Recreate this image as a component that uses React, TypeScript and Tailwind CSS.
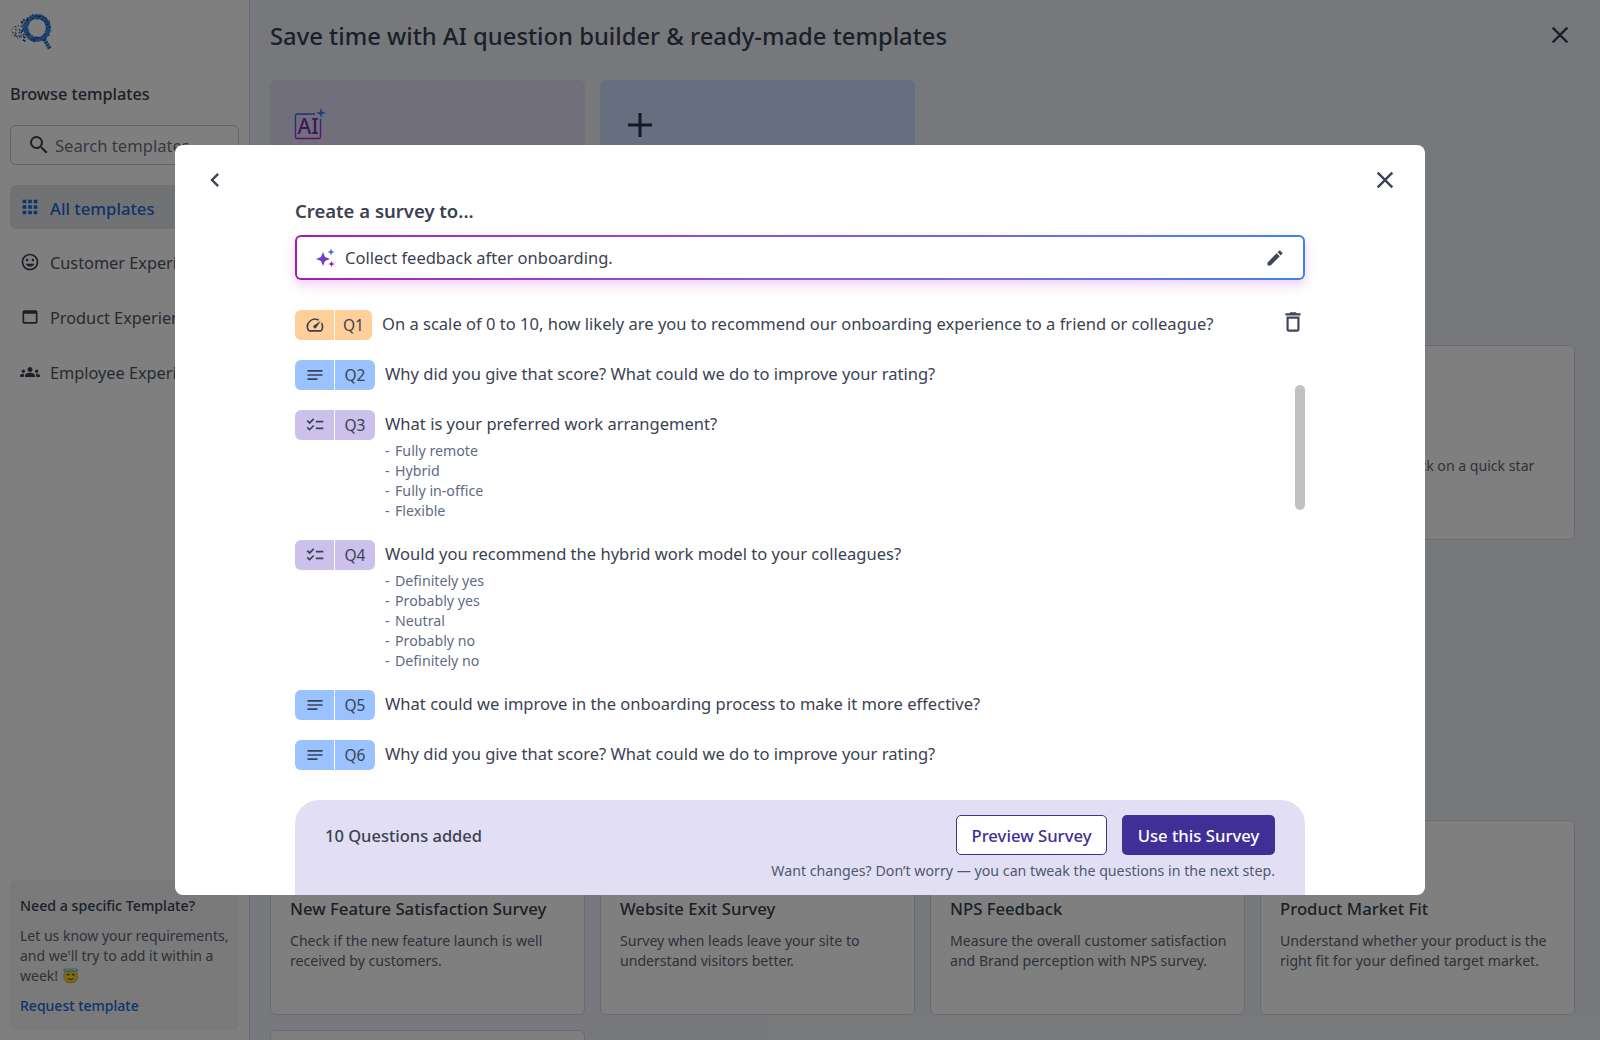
import React from "react";

const F = "font-['Noto_Sans','Open_Sans',sans-serif]";

function Mi({ d, className }: { d: string; className?: string }) {
  return (
    <svg viewBox="0 0 24 24" fill="currentColor" className={className}>
      <path d={d} />
    </svg>
  );
}

const P = {
  back: "M15.41 7.41 14 6l-6 6 6 6 1.41-1.41L10.83 12z",
  close: "M19 6.41 17.59 5 12 10.59 6.41 5 5 6.41 10.59 12 5 17.59 6.41 19 12 13.41 17.59 19 19 17.59 13.41 12z",
  edit: "M3 17.25V21h3.75L17.81 9.94l-3.75-3.75L3 17.25zM20.71 7.04c.39-.39.39-1.02 0-1.41l-2.34-2.34c-.39-.39-1.02-.39-1.41 0l-1.83 1.83 3.75 3.75 1.83-1.83z",
  trash: "M6 19c0 1.1.9 2 2 2h8c1.1 0 2-.9 2-2V7H6v12zM8 9h8v10H8V9zm7.5-5l-1-1h-5l-1 1H5v2h14V4z",
  speed: "M20.38 8.57l-1.23 1.85a8 8 0 0 1-.22 7.58H5.07A8 8 0 0 1 15.58 6.85l1.85-1.23A10 10 0 0 0 3.35 19a2 2 0 0 0 1.72 1h13.85a2 2 0 0 0 1.74-1 10 10 0 0 0-.27-10.44zm-9.79 6.84a2 2 0 0 0 2.83 0l5.66-8.49-8.49 5.66a2 2 0 0 0 0 2.83z",
  notes: "M3 18h12v-2H3v2zM3 6v2h18V6H3zm0 7h18v-2H3v2z",
  check: "M22 7h-9v2h9V7zm0 8h-9v2h9v-2zM5.54 11 2 7.46l1.41-1.41 2.12 2.12 4.24-4.24 1.41 1.41L5.54 11zm0 8L2 15.46l1.41-1.41 2.12 2.12 4.24-4.24 1.41 1.41L5.54 19z",
  apps: "M4 8h4V4H4v4zm6 12h4v-4h-4v4zm-6 0h4v-4H4v4zm0-6h4v-4H4v4zm6 0h4v-4h-4v4zm6-10v4h4V4h-4zm-6 4h4V4h-4v4zm6 6h4v-4h-4v4zm0 6h4v-4h-4v4z",
  smile: "M11.99 2C6.47 2 2 6.48 2 12s4.47 10 9.99 10C17.52 22 22 17.52 22 12S17.52 2 11.99 2zM12 20c-4.42 0-8-3.58-8-8s3.58-8 8-8 8 3.58 8 8-3.58 8-8 8zm3.5-9c.83 0 1.5-.67 1.5-1.5S16.33 8 15.5 8 14 8.67 14 9.5s.67 1.5 1.5 1.5zm-7 0c.83 0 1.5-.67 1.5-1.5S9.33 8 8.5 8 7 8.67 7 9.5 7.67 11 8.5 11zm3.5 6.5c2.33 0 4.31-1.46 5.11-3.5H6.89c.8 2.04 2.78 3.5 5.11 3.5z",
  web: "M19 4H5c-1.11 0-2 .9-2 2v12c0 1.1.89 2 2 2h14c1.1 0 2-.9 2-2V6c0-1.1-.89-2-2-2zm0 14H5V8h14v10z",
  groups: "M12 12.75c1.63 0 3.07.39 4.24.9 1.08.48 1.76 1.56 1.76 2.73V18H6v-1.61c0-1.18.68-2.26 1.76-2.73 1.17-.52 2.61-.91 4.24-.91zM4 13c1.1 0 2-.9 2-2s-.9-2-2-2-2 .9-2 2 .9 2 2 2zm1.13 1.1c-.37-.06-.74-.1-1.13-.1-.99 0-1.93.21-2.78.58C.48 14.9 0 15.62 0 16.43V18h4.5v-1.61c0-.83.23-1.61.63-2.29zM20 13c1.1 0 2-.9 2-2s-.9-2-2-2-2 .9-2 2 .9 2 2 2zm4 3.43c0-.81-.48-1.53-1.22-1.85-.85-.37-1.79-.58-2.78-.58-.39 0-.76.04-1.13.1.4.68.63 1.46.63 2.29V18H24v-1.57zM12 6c1.66 0 3 1.34 3 3s-1.34 3-3 3-3-1.34-3-3 1.34-3 3-3z",
  search: "M15.5 14h-.79l-.28-.27A6.471 6.471 0 0 0 16 9.5 6.5 6.5 0 1 0 9.5 16c1.61 0 3.09-.59 4.23-1.57l.27.28v.79l5 4.99L20.49 19l-4.99-5zm-6 0C7.01 14 5 11.99 5 9.5S7.01 5 9.5 5 14 7.01 14 9.5 11.99 14 9.5 14z",
};

function Logo() {
  let seed = 12345;
  const rnd = () => {
    seed = (seed * 1103515245 + 12345) % 2147483648;
    return seed / 2147483648;
  };
  const speck: React.ReactNode[] = [];
  for (let i = 0; i < 170; i++) {
    const a = rnd() * Math.PI * 2;
    const r = 8.8 + rnd() * 5.6;
    const v = rnd();
    speck.push(
      <circle key={i} cx={27 + r * Math.cos(a)} cy={16 + r * Math.sin(a)} r={0.7} fill={v < 0.22 ? "#14305f" : v < 0.62 ? "#5aa2f5" : "#2468c8"} />
    );
  }
  const dots: React.ReactNode[] = [];
  for (let i = 0; i < 60; i++) {
    const x = 1 + rnd() * 14;
    const h = 2 + x * 0.7;
    const y = 19 + (rnd() - 0.5) * 2 * h;
    dots.push(<circle key={i} cx={x} cy={y} r={0.35 + (x / 15) * 0.5} fill={rnd() < 0.6 ? "#2a66c0" : "#1d2c4c"} />);
  }
  return (
    <svg viewBox="0 0 44 40" className="w-[44px] h-[40px]">
      {dots}
      <circle cx="27" cy="16" r="11.5" fill="none" stroke="#3f86e0" strokeWidth="4.6" />
      {speck}
      <path d="M34 27 L40 37" stroke="#2a6ecb" strokeWidth="3.8" strokeDasharray="2.4 0.5" />
    </svg>
  );
}

function NavItem({ d, label, active, big }: { d: string; label: string; active?: boolean; big?: boolean }) {
  return (
    <div className={`flex items-center h-[44px] pl-[10px] rounded-md ${active ? "bg-[#e1e4e8] text-[#1a66d8] font-medium text-[16.7px]" : "text-[#4b5563] text-[16.3px]"}`}>
      <span className="w-[20px] flex items-center justify-center">
        <Mi d={d} className={`${big ? "w-[22px] h-[22px]" : "w-[20px] h-[20px]"} shrink-0 ${active ? "text-[#1a66d8]" : "text-[#374151]"}`} />
      </span>
      <span className="whitespace-nowrap ml-[10px] pt-[3px]">{label}</span>
    </div>
  );
}

function Card({ title, desc }: { title: string; desc: string }) {
  return (
    <div className="h-[195px] bg-white border border-[#d4d7dd] rounded-md pl-[19px] pr-[12px] pt-[76px]">
      <div className="text-[16.7px] leading-[24px] font-medium text-[#374151] whitespace-nowrap">{title}</div>
      <div className="mt-[10px] text-[14.1px] leading-[20px] text-[#5b6472]">{desc}</div>
    </div>
  );
}

type Kind = "speed" | "notes" | "check";
const KIND: Record<Kind, { bg: string; d: string }> = {
  speed: { bg: "bg-[#ffcf99]", d: P.speed },
  notes: { bg: "bg-[#99c2ff]", d: P.notes },
  check: { bg: "bg-[#cbc1ea]", d: P.check },
};

function Question({ n, kind, text, options, trash }: { n: string; kind: Kind; text: string; options?: string[]; trash?: boolean }) {
  const k = KIND[kind];
  return (
    <div>
      <div className="flex items-center h-[30px] relative">
        <div className="flex h-[30px] rounded-md overflow-hidden text-[#3b4252]">
          <div className={`${k.bg} w-[40px] flex items-center justify-center border-r border-white`}>
            <Mi d={k.d} className="w-[20px] h-[20px]" />
          </div>
          <div className={`${k.bg} ${n === "Q1" ? "w-[37px]" : "w-[40px]"} flex items-center justify-center text-[15.5px] pt-[1px]`}>{n}</div>
        </div>
        <div className="ml-[10px] text-[16.55px] text-[#3b4252] whitespace-nowrap -mt-[2px]">{text}</div>
        {trash && <Mi d={P.trash} className="absolute right-[-1px] top-[-1px] w-[26px] h-[26px] text-[#3f4759]" />}
      </div>
      {options && (
        <div className="ml-[90px] mt-[1px] -mb-[1px] text-[14.2px] leading-[20px] text-[#5f6b85]">
          {options.map((o) => (
            <div key={o} className="flex">
              <span className="w-[10px]">-</span>
              <span>{o}</span>
            </div>
          ))}
        </div>
      )}
    </div>
  );
}

function Sparkles() {
  return (
    <svg viewBox="0 0 22 20" className="w-[22px] h-[20px]">
      <defs>
        <linearGradient id="sp" x1="0" y1="0" x2="1" y2="1">
          <stop offset="0" stopColor="#3b5fe0" />
          <stop offset="1" stopColor="#a21caf" />
        </linearGradient>
      </defs>
      <path fill="url(#sp)" d="M8 4 L10 9 L15 11 L10 13 L8 18 L6 13 L1 11 L6 9 Z" />
      <path fill="#3b6fe0" d="M16 0.5 L17 3 L19.5 4 L17 5 L16 7.5 L15 5 L12.5 4 L15 3 Z" />
      <path fill="#a21caf" d="M16.5 13 L17.4 15.1 L19.5 16 L17.4 16.9 L16.5 19 L15.6 16.9 L13.5 16 L15.6 15.1 Z" />
    </svg>
  );
}

function AiIcon() {
  return (
    <svg viewBox="0 0 32 32" className="w-[32px] h-[32px]">
      <defs>
        <linearGradient id="ai" x1="0" y1="0" x2="0" y2="1">
          <stop offset="0" stopColor="#3b5fe0" />
          <stop offset="1" stopColor="#c026d3" />
        </linearGradient>
      </defs>
      <path d="M21 6 H3 a1.5 1.5 0 0 0 -1.5 1.5 V29 a1.5 1.5 0 0 0 1.5 1.5 H25 a1.5 1.5 0 0 0 1.5 -1.5 V11" fill="none" stroke="url(#ai)" strokeWidth="1.4" />
      <path d="M27 0 L28.2 3.8 L32 5 L28.2 6.2 L27 10 L25.8 6.2 L22 5 L25.8 3.8 Z" fill="#3b82f6" />
      <text x="3.5" y="26" fontSize="21" fontWeight="500" fill="#7c2fb8" fontFamily="Noto Sans, sans-serif">AI</text>
    </svg>
  );
}

export default function App() {
  return (
    <div className={`${F} w-[1600px] h-[1040px] relative overflow-hidden flex bg-[#eef1f6]`}>
      {/* Sidebar */}
      <aside className="w-[250px] h-full bg-white border-r border-[#d4d7dd] px-[10px] flex flex-col shrink-0">
        <div className="pt-[12px] h-[80px]"><Logo /></div>
        <div className="text-[16.3px] font-medium text-[#374151] leading-[28px]">Browse templates</div>
        <div className="mt-[17px] h-[40px] border border-[#c9ccd2] rounded-md flex items-center pl-[16px] gap-[4px] text-[16.6px] text-[#6b7280]">
          <Mi d={P.search} className="w-[24px] h-[24px] text-[#374151]" />
          <span className="pt-[2px]">Search templates</span>
        </div>
        <div className="mt-[20px] flex flex-col gap-[11px]">
          <NavItem d={P.apps} label="All templates" active big />
          <NavItem d={P.smile} label="Customer Experience" />
          <NavItem d={P.web} label="Product Experience" />
          <NavItem d={P.groups} label="Employee Experience" />
        </div>
        <div className="mt-auto mb-[10px] bg-[#f4f5f6] rounded-md px-[10px] pt-[15px] h-[150px]">
          <div className="text-[14.2px] font-medium text-[#374151]">Need a specific Template?</div>
          <div className="mt-[10px] text-[14px] leading-[20px] text-[#5b6472]">
            Let us know your requirements, and we'll try to add it within a week! 😇
          </div>
          <div className="mt-[9px] text-[14px] font-medium text-[#1a66d8]">Request template</div>
        </div>
      </aside>

      {/* Main */}
      <main className="flex-1 pl-[20px] pr-[25px] min-w-0">
        <div className="h-[80px] flex items-center pb-[6px] relative">
          <h1 className="text-[23.8px] font-medium text-[#374151]">Save time with AI question builder &amp; ready-made templates</h1>
          <Mi d={P.close} className="absolute right-[1px] top-[21px] w-[28px] h-[28px] text-[#374151]" />
        </div>
        <div className="grid grid-cols-4 gap-[15px]">
          <div className="h-[150px] rounded-md bg-[#e2def6] px-[24px] pt-[28px]"><AiIcon /></div>
          <div className="h-[150px] rounded-md bg-[#ccdfff] pl-[26px] pt-[31px]">
            <svg viewBox="0 0 28 28" className="w-[28px] h-[28px] text-[#27324a]"><path d="M14 2 V26 M2 14 H26" stroke="currentColor" strokeWidth="3" /></svg>
          </div>
        </div>
        <div className="grid grid-cols-4 gap-[15px] mt-[115px]">
          <div className="col-start-4"><Card title="Quickstart Survey" desc="Get customer feedback on a quick star rating." /></div>
        </div>
        <div className="grid grid-cols-4 gap-x-[15px] gap-y-[15px] mt-[280px]">
          <Card title="New Feature Satisfaction Survey" desc="Check if the new feature launch is well received by customers." />
          <Card title="Website Exit Survey" desc="Survey when leads leave your site to understand visitors better." />
          <Card title="NPS Feedback" desc="Measure the overall customer satisfaction and Brand perception with NPS survey." />
          <Card title="Product Market Fit" desc="Understand whether your product is the right fit for your defined target market." />
          <div className="h-[195px] bg-white border border-[#d4d7dd] rounded-md" />
        </div>
      </main>

      {/* Overlay */}
      <div className="absolute inset-0 bg-black/50 flex items-center justify-center">
        <div className="w-[1250px] h-[750px] bg-white rounded-lg flex flex-col relative overflow-hidden">
          <div className="h-[70px] flex items-center justify-between px-[26px] shrink-0">
            <Mi d={P.back} className="w-[28px] h-[28px] text-[#3b4252]" />
            <Mi d={P.close} className="w-[28px] h-[28px] text-[#3b4252]" />
          </div>
          <div className="flex-1 px-[120px] flex flex-col min-h-0">
            <div className="text-[18.5px] font-semibold text-[#3b4252] leading-[20px] mt-[-14px]">Create a survey to...</div>
            <div className="mt-[14px] h-[45px] rounded-md p-[2px] bg-gradient-to-r from-[#a21caf] to-[#3b82f6] shadow-[0_5px_12px_rgba(192,38,211,0.22)] shrink-0">
              <div className="h-full bg-white rounded-[4px] flex items-center pl-[18px] pr-[18px] gap-[8px] text-[16.5px] text-[#3b4252]">
                <Sparkles />
                <span className="flex-1 pt-[2px]">Collect feedback after onboarding.</span>
                <Mi d={P.edit} className="w-[20px] h-[20px] text-[#3f4759]" />
              </div>
            </div>
            <div className="relative mt-[30px] flex-1 min-h-0 flex flex-col gap-[20px]">
              <Question n="Q1" kind="speed" trash text="On a scale of 0 to 10, how likely are you to recommend our onboarding experience to a friend or colleague?" />
              <Question n="Q2" kind="notes" text="Why did you give that score? What could we do to improve your rating?" />
              <Question n="Q3" kind="check" text="What is your preferred work arrangement?" options={["Fully remote", "Hybrid", "Fully in-office", "Flexible"]} />
              <Question n="Q4" kind="check" text="Would you recommend the hybrid work model to your colleagues?" options={["Definitely yes", "Probably yes", "Neutral", "Probably no", "Definitely no"]} />
              <Question n="Q5" kind="notes" text="What could we improve in the onboarding process to make it more effective?" />
              <Question n="Q6" kind="notes" text="Why did you give that score? What could we do to improve your rating?" />
              <div className="absolute right-0 top-[75px] w-[10px] h-[125px] rounded-full bg-[#c1c1c1]" />
            </div>
            <div className="h-[95px] shrink-0 bg-[#e2dff4] rounded-t-[24px] px-[30px] pt-[15px]">
              <div className="flex items-center justify-between h-[40px]">
                <div className="text-[16.5px] font-medium text-[#3b4252] pt-[2px]">10 Questions added</div>
                <div className="flex gap-[15px]">
                  <button className="h-[40px] w-[151px] pt-[2px] rounded-[5px] bg-white border border-[#3f2f96] text-[#3f2f96] text-[16.7px] font-medium">Preview Survey</button>
                  <button className="h-[40px] w-[153px] pt-[2px] rounded-[5px] bg-[#3f2f96] text-white text-[16.7px] font-medium">Use this Survey</button>
                </div>
              </div>
              <div className="text-right text-[14.2px] leading-[20px] mt-[6px] text-[#4f5870]">Want changes? Don’t worry — you can tweak the questions in the next step.</div>
            </div>
          </div>
        </div>
      </div>
    </div>
  );
}
